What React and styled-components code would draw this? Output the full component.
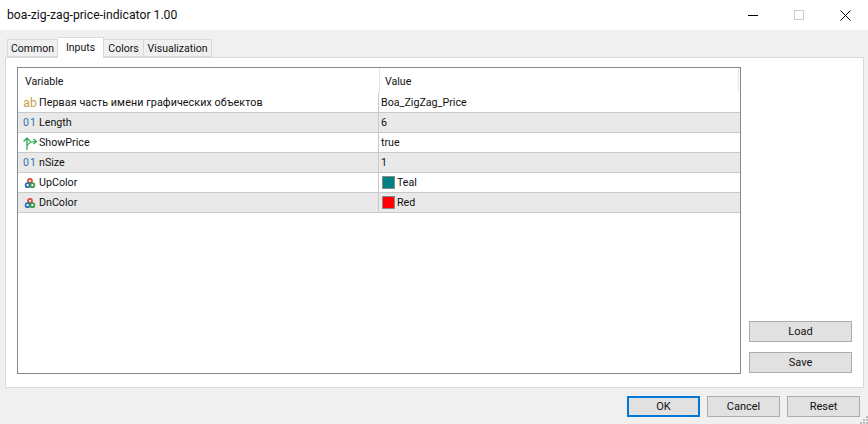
import React from "react"
import styled, { createGlobalStyle } from "styled-components"

const GlobalStyle = createGlobalStyle`
  html, body {
    margin: 0;
    padding: 0;
    background: #f0f0f0;
  }
  body {
    font-family: Roboto, "Liberation Sans", Arial, sans-serif;
    font-size: 11px;
    color: #111;
  }
`

const Dialog = styled.div`
  width: 868px;
  height: 424px;
  display: flex;
  flex-direction: column;
  overflow: hidden;
  position: relative;
`

const TitleBar = styled.div`
  height: 30px;
  flex: none;
  background: #fff;
  display: flex;
  align-items: center;
  padding-left: 7px;
  font-size: 12.2px;
`

const TitleText = styled.span`
  flex: 1;
`

const WinButton = styled.div`
  width: 46px;
  height: 30px;
  display: flex;
  align-items: center;
  justify-content: center;
`

const Tabs = styled.div`
  display: flex;
  align-items: flex-end;
  height: 28px;
  padding-left: 7px;
  flex: none;
  position: relative;
  z-index: 1;
  font-size: 10.5px;
`

const Tab = styled.div`
  width: ${p => p.$width}px;
  height: ${p => (p.$active ? "21px" : "18px")};
  margin-bottom: ${p => (p.$active ? "0" : "1px")};
  display: flex;
  align-items: center;
  justify-content: center;
  box-sizing: border-box;
  background: ${p => (p.$active ? "#fff" : "#f0f0f0")};
  border: 1px solid #d9d9d9;
  border-left: ${p => (p.$noLeft ? "none" : "1px solid #d9d9d9")};
  border-bottom: ${p => (p.$active ? "none" : "1px solid #d9d9d9")};
  padding: ${p => (p.$active ? "0 0 2px" : "1px 0 0")};
`

const Panel = styled.div`
  height: 331px;
  margin: -1px 4px 0 5px;
  box-sizing: border-box;
  background: #fff;
  border: 1px solid #d9d9d9;
  display: flex;
  padding: 9px 10px 13px 11px;
  flex: none;
`

const Table = styled.div`
  width: 724px;
  box-sizing: border-box;
  border: 1px solid #828790;
  flex: none;
`

const HeadRow = styled.div`
  display: grid;
  grid-template-columns: 361px 1fr;
  height: 25px;
`

const HeadCell = styled.div`
  display: flex;
  align-items: center;
  padding: 1px 0 0 ${p => (p.$value ? "5px" : "7px")};
  border-left: ${p => (p.$value ? "1px solid #e5e5e5" : "none")};
  border-right: ${p => (p.$value ? "1px solid #e5e5e5" : "none")};
  margin-right: ${p => (p.$value ? "1px" : "0")};
  font-size: 10.6px;
`

const Row = styled.div`
  display: grid;
  grid-template-columns: 361px 1fr;
  height: 20px;
  box-sizing: border-box;
  background: ${p => (p.$alt ? "#e9e9e9" : "#fff")};
  border-bottom: 1px solid #c9c9c9;
  font-size: 10.7px;
`

const NameCell = styled.div`
  display: flex;
  align-items: center;
  gap: 1px;
  padding-left: 4px;
  border-right: 1px solid #c9c9c9;
`

const NameText = styled.span`
  letter-spacing: ${p => (p.$cyrillic ? "0.1px" : "0")};
`

const ValueCell = styled.div`
  display: flex;
  align-items: center;
  gap: 2px;
  padding-left: 2px;
`

const IconBox = styled.span`
  width: 16px;
  height: 16px;
  flex: none;
  display: flex;
  align-items: center;
  justify-content: center;
`

const Swatch = styled.span`
  width: 13px;
  height: 13px;
  margin-left: 1px;
  box-sizing: border-box;
  border: 1px solid #8a8a8a;
  background: ${p => p.$color};
`

const AbIcon = styled.span`
  color: #c8994b;
  font-size: 12px;
`

const NumIcon = styled.span`
  color: #2a6fb0;
  font-size: 10.5px;
  letter-spacing: 1px;
`

const Side = styled.div`
  flex: 1;
  display: flex;
  flex-direction: column;
  justify-content: flex-end;
  align-items: flex-start;
  gap: 10px;
  padding: 0 0 1px 8px;
`

const Button = styled.div`
  width: ${p => (p.$wide ? "103px" : "73px")};
  height: 21px;
  box-sizing: border-box;
  display: flex;
  align-items: center;
  justify-content: center;
  background: #e1e1e1;
  border: ${p => (p.$primary ? "2px solid #0078d7" : "1px solid #adadad")};
`

const Footer = styled.div`
  flex: 1;
  display: flex;
  justify-content: flex-end;
  align-items: flex-start;
  gap: 7px;
  padding: 8px 8px 0 0;
`

const Grip = styled.svg`
  position: absolute;
  right: 0;
  bottom: 0;
`

const BoolIcon = () => (
  <svg width="16" height="16" viewBox="0 0 16 16" fill="none" stroke="#22a94a" strokeWidth="1.2">
    <path d="M5 15V3M1.5 6.5L5 3L8.5 6.5M5 11C6.5 7.5 9.5 6.5 14 6.5M11.5 4L14.5 6.5L11.5 9" />
  </svg>
)

const ColorIcon = () => (
  <svg width="16" height="16" viewBox="0 0 16 16" fill="#fff" strokeWidth="1.7">
    <circle cx="8" cy="5.8" r="2" stroke="#d9483b" />
    <circle cx="5.6" cy="10.2" r="2" stroke="#2b6fb5" />
    <circle cx="10.4" cy="10.2" r="2" stroke="#3a9e46" />
  </svg>
)

const rows = [
  { icon: "ab", name: "Первая часть имени графических объектов", value: "Boa_ZigZag_Price", cyrillic: true },
  { icon: "num", name: "Length", value: "6" },
  { icon: "bool", name: "ShowPrice", value: "true" },
  { icon: "num", name: "nSize", value: "1" },
  { icon: "color", name: "UpColor", value: "Teal", color: "#008080" },
  { icon: "color", name: "DnColor", value: "Red", color: "#ff0000" },
]

const renderIcon = icon => {
  if (icon === "ab") return <AbIcon>ab</AbIcon>
  if (icon === "num") return <NumIcon>01</NumIcon>
  if (icon === "bool") return <BoolIcon />
  return <ColorIcon />
}

export default function App() {
  return (
    <Dialog>
      <GlobalStyle />
      <TitleBar>
        <TitleText>boa-zig-zag-price-indicator 1.00</TitleText>
        <WinButton>
          <svg width="10" height="10"><path d="M0 5.5H10" stroke="#000" /></svg>
        </WinButton>
        <WinButton>
          <svg width="10" height="10"><rect x="0.5" y="0.5" width="9" height="9" fill="none" stroke="#ccc" /></svg>
        </WinButton>
        <WinButton>
          <svg width="11" height="11"><path d="M0.5 0.5L10.5 10.5M10.5 0.5L0.5 10.5" stroke="#000" /></svg>
        </WinButton>
      </TitleBar>
      <Tabs>
        <Tab $width={51}>Common</Tab>
        <Tab $width={46} $active $noLeft>Inputs</Tab>
        <Tab $width={40} $noLeft>Colors</Tab>
        <Tab $width={68} $noLeft>Visualization</Tab>
      </Tabs>
      <Panel>
        <Table>
          <HeadRow>
            <HeadCell>Variable</HeadCell>
            <HeadCell $value>Value</HeadCell>
          </HeadRow>
          {rows.map((r, i) => (
            <Row key={r.name} $alt={i % 2 === 1}>
              <NameCell>
                <IconBox>{renderIcon(r.icon)}</IconBox>
                <NameText $cyrillic={r.cyrillic}>{r.name}</NameText>
              </NameCell>
              <ValueCell>
                {r.color && <Swatch $color={r.color} />}
                {r.value}
              </ValueCell>
            </Row>
          ))}
        </Table>
        <Side>
          <Button $wide>Load</Button>
          <Button $wide>Save</Button>
        </Side>
      </Panel>
      <Footer>
        <Button $primary>OK</Button>
        <Button>Cancel</Button>
        <Button>Reset</Button>
      </Footer>
      <Grip width="8" height="8" fill="#bbb">
        <rect x="6" y="0" width="2" height="2" />
        <rect x="3" y="3" width="2" height="2" />
        <rect x="6" y="3" width="2" height="2" />
        <rect x="0" y="6" width="2" height="2" />
        <rect x="3" y="6" width="2" height="2" />
        <rect x="6" y="6" width="2" height="2" />
      </Grip>
    </Dialog>
  )
}
